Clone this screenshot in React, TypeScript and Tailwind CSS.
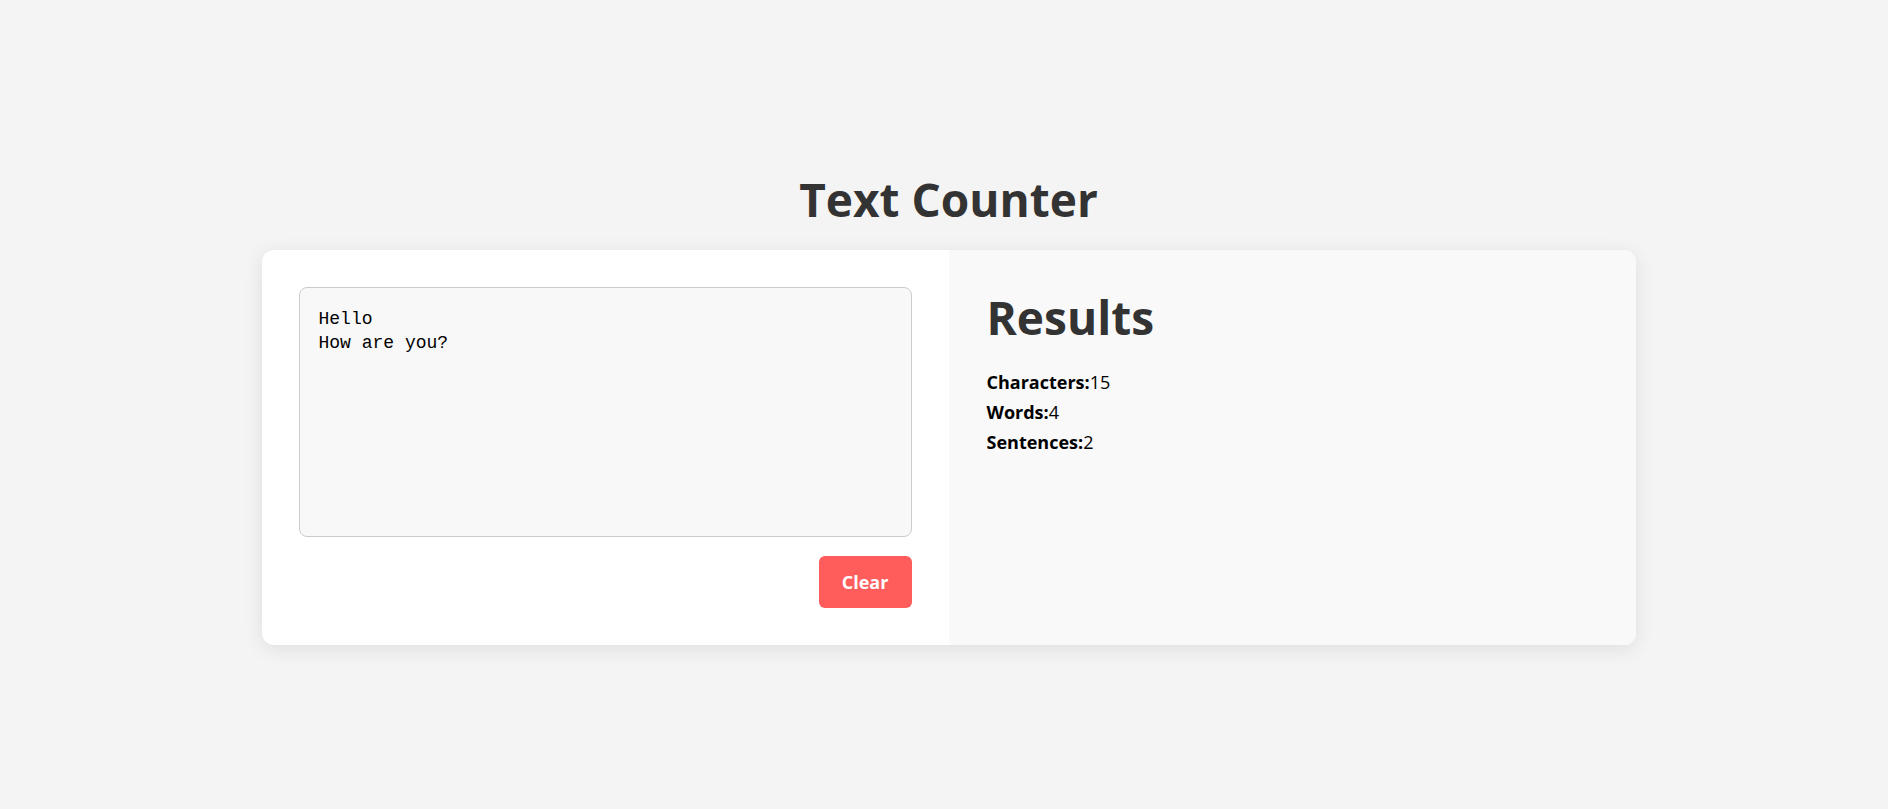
import { useState } from "react";

const countWords = (text: string) => text.trim().split(/\s+/).filter(Boolean).length;

const countSentences = (text: string) =>
  text.split(/[.!?\n]+/).filter((s) => s.trim().length > 0).length;

const App = () => {
  const [text, setText] = useState("Hello\nHow are you?");

  // characters are counted without whitespace
  const characters = text.replace(/\s/g, "").length;
  const words = countWords(text);
  const sentences = countSentences(text);

  return (
    <div className="min-h-screen bg-[#f4f4f4] font-['Open_Sans',sans-serif] text-black">
      <div className="flex flex-col items-center pl-[9px] pt-[176px]">
        <h1 className="mb-[28px] text-[46px] font-bold leading-none text-[#333]">Text Counter</h1>

        <div className="grid w-[1374px] grid-cols-2 overflow-hidden rounded-xl bg-white shadow-[0_4px_20px_rgba(0,0,0,0.09)]">
          <div className="flex flex-col p-[37px]">
            <textarea
              value={text}
              onChange={(e) => setText(e.target.value)}
              className="h-[250px] w-full resize-none rounded-lg border border-[#cccccc] bg-[#f8f8f8] p-[19px] font-['Liberation_Mono',monospace] text-[18px] leading-[24px] text-black outline-none"
            />
            <div className="mt-[19px] flex justify-end">
              <button
                onClick={() => setText("")}
                className="h-[52px] w-[93px] rounded-md bg-[#ff5c5c] text-[18px] font-bold text-white"
              >
                Clear
              </button>
            </div>
          </div>

          <div className="bg-[#f9f9f9] px-[38px] pt-[44px]">
            <h2 className="text-[46px] font-bold leading-none text-[#333]">Results</h2>
            <div className="mt-[27px] text-[18px] leading-[30px]">
              <p>
                <span className="font-bold">Characters:</span>
                {characters}
              </p>
              <p>
                <span className="font-bold">Words:</span>
                {words}
              </p>
              <p>
                <span className="font-bold">Sentences:</span>
                {sentences}
              </p>
            </div>
          </div>
        </div>
      </div>
    </div>
  );
};

export default App;
